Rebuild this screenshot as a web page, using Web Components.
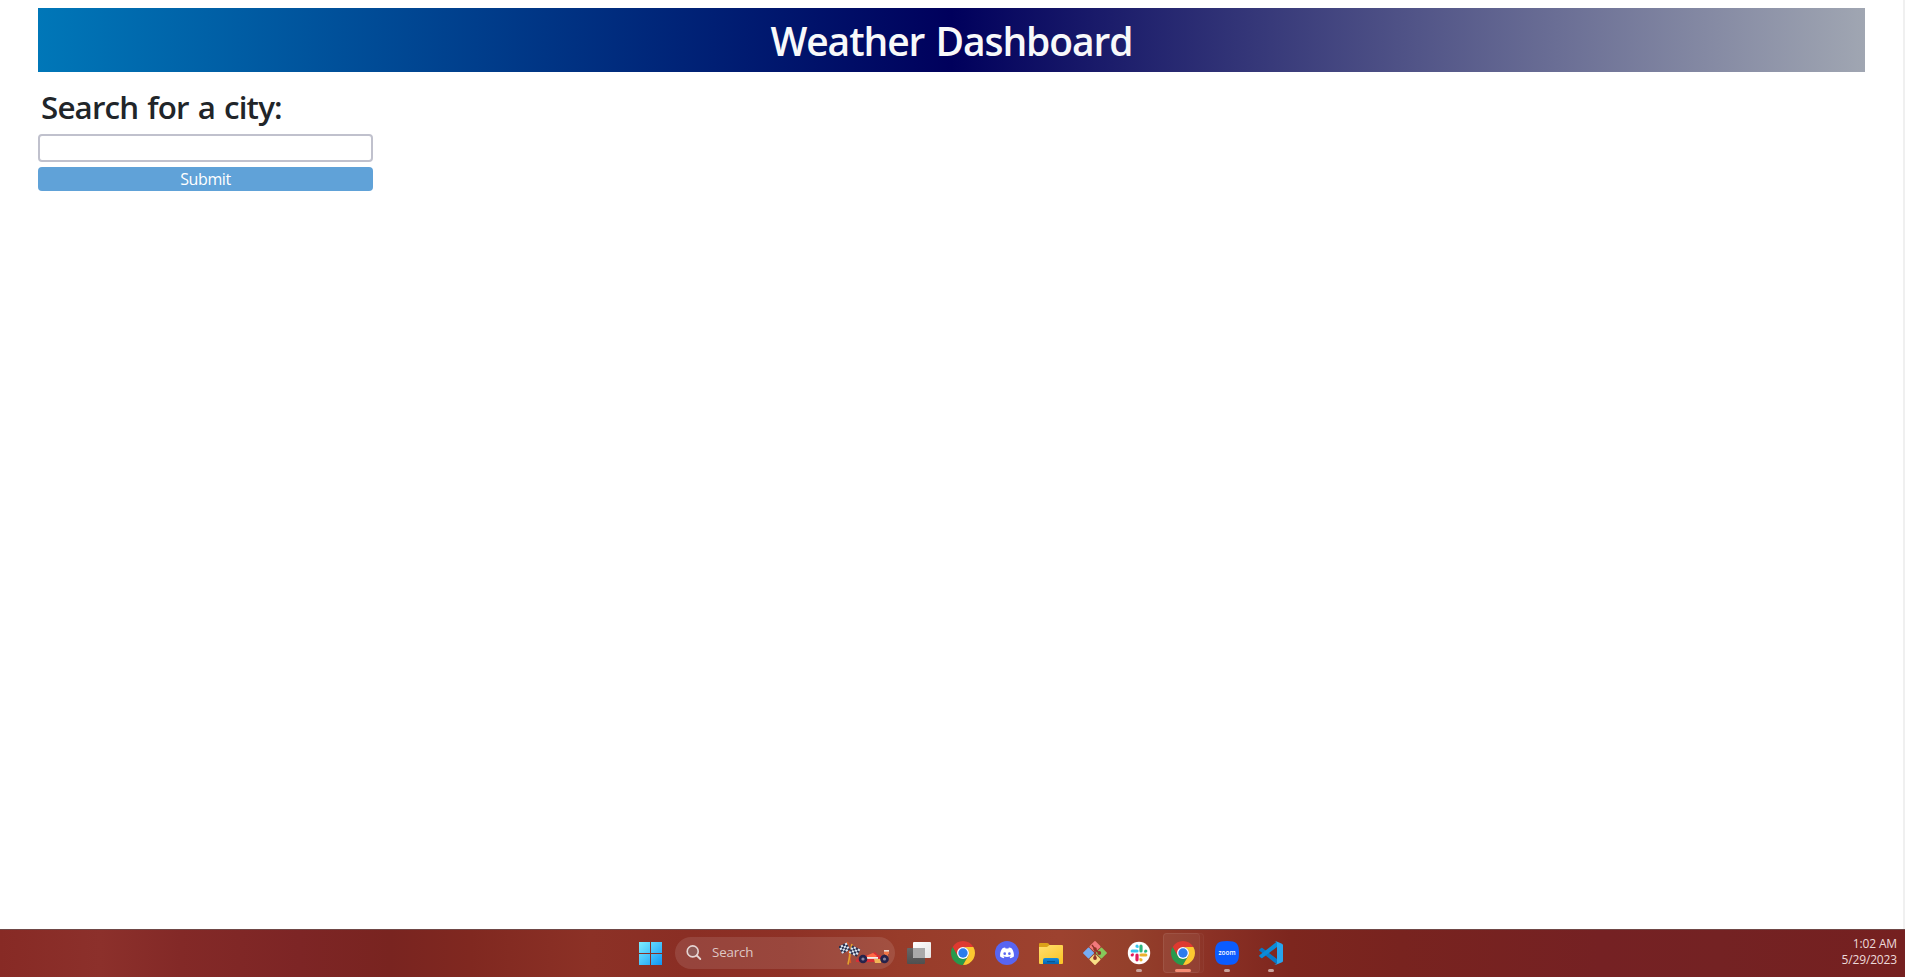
<!DOCTYPE html>
<html lang="en">
<head>
<meta charset="utf-8">
<title>Weather Dashboard</title>
<style>
html,body{margin:0;height:100%;overflow:hidden}
body{font-family:"Open Sans","Noto Sans",sans-serif;color:#212529;background:#fff}
</style>
</head>
<body>
<desktop-screen>
  <weather-header>Weather Dashboard</weather-header>
  <city-search button="Submit">Search for a city:</city-search>
  <task-bar slot="taskbar">
    <task-item icon="start"></task-item>
    <task-search>Search</task-search>
    <task-item icon="taskview"></task-item>
    <task-item icon="chrome"></task-item>
    <task-item icon="discord"></task-item>
    <task-item icon="folder"></task-item>
    <task-item icon="git"></task-item>
    <task-item icon="slack" state="running"></task-item>
    <task-item icon="chrome" state="active"></task-item>
    <task-item icon="zoom" state="running"></task-item>
    <task-item icon="vscode" state="running"></task-item>
    <task-clock slot="tray" time="1:02 AM" date="5/29/2023"></task-clock>
  </task-bar>
</desktop-screen>
<script>
const define = (name, html, setup) => customElements.define(name, class extends HTMLElement {
  constructor() {
    super();
    const t = document.createElement('template');
    t.innerHTML = html;
    this.attachShadow({mode: 'open'}).append(t.content.cloneNode(true));
  }
  connectedCallback() { if (setup) setup(this, this.shadowRoot); }
});

define('desktop-screen', `
<style>
:host{display:flex;flex-direction:column;height:100vh;max-height:977px;overflow:hidden}
main{flex:1;min-height:0;box-sizing:border-box;padding:8px 38px 0;border-right:2px solid #f0f0f0}
</style>
<main><slot></slot></main><slot name="taskbar"></slot>`);

define('weather-header', `
<style>
:host{display:block;height:64px;background:linear-gradient(to right,#0077b8 0%,#00005c 50%,#a0a6b2 100%)}
h1{margin:0;text-align:center;color:#f8f9fa;font-size:39px;font-weight:600;line-height:65px;letter-spacing:-1.07px;word-spacing:2px;white-space:nowrap}
</style>
<h1><slot></slot></h1>`);

define('city-search', `
<style>
:host{display:flex;flex-direction:column;width:335px;padding-top:17px}
h2{margin:0 0 7px 3px;font-size:31.3px;line-height:37px;height:38px;font-weight:600;letter-spacing:-.82px;word-spacing:1.6px;white-space:nowrap}
input{box-sizing:border-box;height:28px;border:2px solid #c0c1cd;border-radius:4px;margin:0 0 5px;padding:0 4px;background:#fff;font:inherit}
button{height:24px;border:0;border-radius:4px;padding:0;background:#60a2d8;color:#fff;font:16px/24px "Open Sans","Noto Sans",sans-serif;letter-spacing:-.4px}
</style>
<h2><slot></slot></h2><input aria-label="City"><button></button>`,
(el, root) => { root.querySelector('button').textContent = el.getAttribute('button'); });

define('task-bar', `
<style>
:host{display:grid;grid-template-columns:629px 1fr auto;grid-template-rows:47px;height:48px;flex:none;overflow:hidden;box-sizing:border-box;border-top:1px solid #704846;
background:linear-gradient(to right,#872a25 0,#8c302b 100px,#832927 180px,#7d2525 300px,#792420 390px,#802820 470px,#8c3126 590px,#8a2e24 690px,#8e3126 790px,#983c2a 900px,#9d422f 1060px,#94402b 1130px,#8b3125 1210px,#7d261e 1290px,#78231f 1400px,#752123 1600px,#742223 1720px,#752020 1905px)}
nav{grid-column:2;display:flex;align-items:center;height:46px}
</style>
<nav><slot></slot></nav><slot name="tray"></slot>`);

define('task-clock', `
<style>
:host{display:flex;flex-direction:column;align-items:flex-end;padding:6px 8px 0 0;color:#ecdada;font-size:12px;line-height:16px}
span{white-space:nowrap;letter-spacing:-.15px}
</style>
<span id="t"></span><span id="d"></span>`,
(el, root) => {
  root.getElementById('t').textContent = el.getAttribute('time');
  root.getElementById('d').textContent = el.getAttribute('date');
});

define('task-search', `
<style>
:host{display:flex;align-items:center;box-sizing:border-box;width:220px;height:32px;margin:0 2px;padding:0 4px 0 10px;border-radius:16px;background:rgba(255,255,255,.11);color:#dec7c5;font-size:13.3px}
.glass{width:18px;height:18px;margin-right:9px;flex:none}
span{flex:1;line-height:30px;height:32px;letter-spacing:-.15px}
.car{width:52px;height:26px;flex:none}
</style>
<svg class="glass" viewBox="0 0 18 18"><circle cx="7.7" cy="7.4" r="5.5" fill="#8a6f70" fill-opacity=".5" stroke="#e6d6d4" stroke-width="1.6"/><path d="M11.8 11.5 15.3 15" stroke="#e6d6d4" stroke-width="1.8" stroke-linecap="round"/></svg>
<span><slot></slot></span>
<svg class="car" viewBox="0 0 52 26">
<path d="M8.500 2 11.500 23" stroke="#dc571f" stroke-width="1.600"/><path d="M13 4 9 24.500" stroke="#e3a22e" stroke-width="1.600"/>
<g transform="translate(-.5 -.5) rotate(-26 5 8)"><path fill="#29304f" d="M1 5h9v8H1z"/><path fill="#dce4ef" d="M3.200 5h2.200v2H3.200zM7.700 5H10v2H7.700zM1 7h2.200v2H1zM5.400 7h2.300v2H5.400zM3.200 9h2.200v2H3.200zM7.700 9H10v2H7.700zM1 11h2.200v2H1zM5.400 11h2.300v2H5.400z"/></g>
<g transform="translate(10.500 2) rotate(26 5 8)"><path fill="#29304f" d="M1 5h9v8H1z"/><path fill="#dce4ef" d="M3.200 5h2.200v2H3.200zM7.700 5H10v2H7.700zM1 7h2.200v2H1zM5.400 7h2.300v2H5.400zM3.200 9h2.200v2H3.200zM7.700 9H10v2H7.700zM1 11h2.200v2H1zM5.400 11h2.300v2H5.400z"/></g>
<path fill="#d92f35" d="M17 20q6-5 12-5l3-1 4-2 3 3 4 1 6 1v5H17z"/><path fill="#ff6946" d="M28 15.500 34 13l4 3-3 3h-8z"/><path fill="#f4f0ea" d="M28 17h11v1.800H28z"/><path fill="#f0b456" d="M35 19h7v4h-6z"/>
<path fill="#f07545" d="M45 11h5v3h-1v3h-3v-3h-1z"/><path fill="#e7d9d5" d="M45 10h5v1.600h-5z"/>
<g fill="#25234b"><circle cx="24" cy="19" r="4.300"/><circle cx="45.500" cy="19" r="4.300"/></g><g fill="#8c849e"><circle cx="24" cy="19" r="1.600"/><circle cx="45.500" cy="19" r="1.600"/></g>
</svg>`);

const icons = {
start: `<defs><linearGradient id="w" x1="0" y1="0" x2="24" y2="24" gradientUnits="userSpaceOnUse"><stop stop-color="#80f0ff"/><stop offset=".5" stop-color="#48c4fb"/><stop offset="1" stop-color="#0b93f5"/></linearGradient></defs><path fill="url(#w)" d="M0 1h11v11H0zM12 1h11v11H12zM0 13h11v11H0zM12 13h11v11H12z"/>`,
taskview: `<defs><linearGradient id="a" x2="1" y2="1"><stop stop-color="#fff"/><stop offset="1" stop-color="#e4e4e4"/></linearGradient><linearGradient id="b" x2="0" y2="1"><stop stop-color="#666"/><stop offset="1" stop-color="#505050"/></linearGradient></defs><rect x="0" y="7" width="18" height="16" rx="1" fill="url(#b)"/><rect x="6" y="1" width="18" height="16" rx="1" fill="url(#a)"/><path fill="#aaa" d="M6 7h12v10H7q-1 0-1-1z"/>`,
chrome: `<path fill="#de3a30" d="M1.610 6A12 12 0 0 1 22.390 6H12L6.800 15z"/><path fill="#289a4c" d="M1.610 6A12 12 0 0 0 12 24L17.200 15 12 17 6.800 15z"/><path fill="#fcc930" d="M22.390 6A12 12 0 0 1 12 24L17.200 15A6 6 0 0 0 12 6z"/><circle cx="12" cy="12" r="6" fill="#fff"/><circle cx="12" cy="12" r="4.700" fill="#2c7cec"/>`,
discord: `<circle cx="12" cy="12" r="12" fill="#5865f2"/><path fill="#fff" d="M16.800 7.400A12 12 0 0 0 13.900 6.500l-.5 1a10 10 0 0 0-2.800 0l-.5-1a12 12 0 0 0-2.900.9C5.400 10.100 4.900 12.800 5.100 15.500a11 11 0 0 0 3.500 1.800l.8-1.300-1.200-.6.300-.2a8.500 8.500 0 0 0 7 0l.3.2-1.200.6.800 1.300a11 11 0 0 0 3.500-1.800c.3-3.100-.5-5.800-2.100-8.100z"/><g fill="#5865f2"><ellipse cx="9.700" cy="12.700" rx="1.300" ry="1.400"/><ellipse cx="14.400" cy="12.700" rx="1.300" ry="1.400"/></g>`,
folder: `<defs><linearGradient id="y" x2=".7" y2="1"><stop stop-color="#ffdf70"/><stop offset="1" stop-color="#fbc62a"/></linearGradient><linearGradient id="u" x2="0" y2="1"><stop stop-color="#168ddd"/><stop offset="1" stop-color="#0766b2"/></linearGradient></defs><path fill="#dba019" d="M0 3q0-1 1-1h7q1 0 2 1l1 2h11v5H0z"/><path fill="url(#y)" d="M0 6h8l2.500-2H23q1 0 1 1v17q0 1-1 1H1q-1 0-1-1z"/><path fill="url(#u)" d="M4 23v-4q0-2 2-2h12q2 0 2 2v4z"/><path fill="#0b5591" d="M8 20h8v1.300H8z"/>`,
git: `<g transform="rotate(45 12 12)"><rect x="3.300" y="3.300" width="8.300" height="8.300" rx=".8" fill="#f2797d"/><rect x="12.400" y="3.300" width="8.300" height="8.300" rx=".8" fill="#86c85a"/><rect x="3.300" y="12.400" width="8.300" height="8.300" rx=".8" fill="#77adf4"/><rect x="12.400" y="12.400" width="8.300" height="8.300" rx=".8" fill="#f8df86"/></g><path d="M9 4 12 8v9M12 8l4 4" fill="none" stroke="#8f3326" stroke-width="1.400"/><g fill="#8f3326"><circle cx="12" cy="8" r="1.800"/><circle cx="12" cy="17" r="1.900"/><circle cx="16.300" cy="12" r="1.900"/></g>`,
slack: `<circle cx="12" cy="12" r="11.200" fill="#fff"/><g stroke-width="3.200" stroke-linecap="round"><path stroke="#36c5f0" d="M10 5.200v0M5.200 10H10"/><path stroke="#2eb67d" d="M14 5.200V10M18.800 10v0"/><path stroke="#ecb22e" d="M14 14h4.800M14 18.800v0"/><path stroke="#e01e5a" d="M10 14v4.800M5.200 14v0"/></g><path fill="#36c5f0" d="M10 5.200h1.500v1.500H10z"/><path fill="#2eb67d" d="M17.300 10h1.500v1.500h-1.500z"/><path fill="#ecb22e" d="M12.500 17.300H14v1.500h-1.500z"/><path fill="#e01e5a" d="M5.200 12.500h1.500V14H5.200z"/>`,
zoom: `<path fill="#0b5cff" d="M12 0C21.500 0 24 2.500 24 12s-2.500 12-12 12S0 21.500 0 12 2.500 0 12 0z"/><text x="12" y="14.200" text-anchor="middle" textLength="17" lengthAdjust="spacingAndGlyphs" font-family="Open Sans" font-weight="600" font-size="7.500" fill="#fff">zoom</text>`,
vscode: `<path fill="#0878c7" d="M.4 8.600 2.200 7q.6-.5 1.200 0L18 18v5.500L.4 9.800q-.5-.6 0-1.200z"/><path fill="#0b8bd8" d="M.4 15.400 2.200 17q.6.500 1.200 0L18 6V.5L.4 14.200q-.5.6 0 1.200z"/><path fill="#27a5ee" d="M17 .2 23 2.800q1 .5 1 1.500v15.400q0 1-1 1.500L17 23.800q-1 .3-1.600-.6 2.600.8 2.600-1.400V2.200q0-2.200-2.600-1.400.6-.9 1.600-.6z"/>`
};

define('task-item', `
<style>
:host{display:flex;position:relative;width:44px;height:46px;flex:none;align-items:center;justify-content:center}
svg{display:block;width:24px;height:24px;position:relative;overflow:visible}
i{display:none;position:absolute;bottom:4px;height:3px;border-radius:2px;width:6px;background:#c8a29b}
:host([state]) i{display:block}
:host([state=active]) i{width:16px;background:#f48c74}
b{display:none;position:absolute;box-sizing:border-box;top:3px;height:40px;border:1px solid rgba(255,255,255,.04);border-radius:4px}
:host([state=active]) b{display:block}
.front{left:2px;width:37px;background:rgba(255,255,255,.05)}
.back{left:2px;width:41px;background:rgba(255,255,255,.015)}
</style>
<b class="back"></b><b class="front"></b><svg viewBox="0 0 24 24"></svg><i></i>`,
(el, root) => { root.querySelector('svg').innerHTML = icons[el.getAttribute('icon')]; });
</script>
</body>
</html>
